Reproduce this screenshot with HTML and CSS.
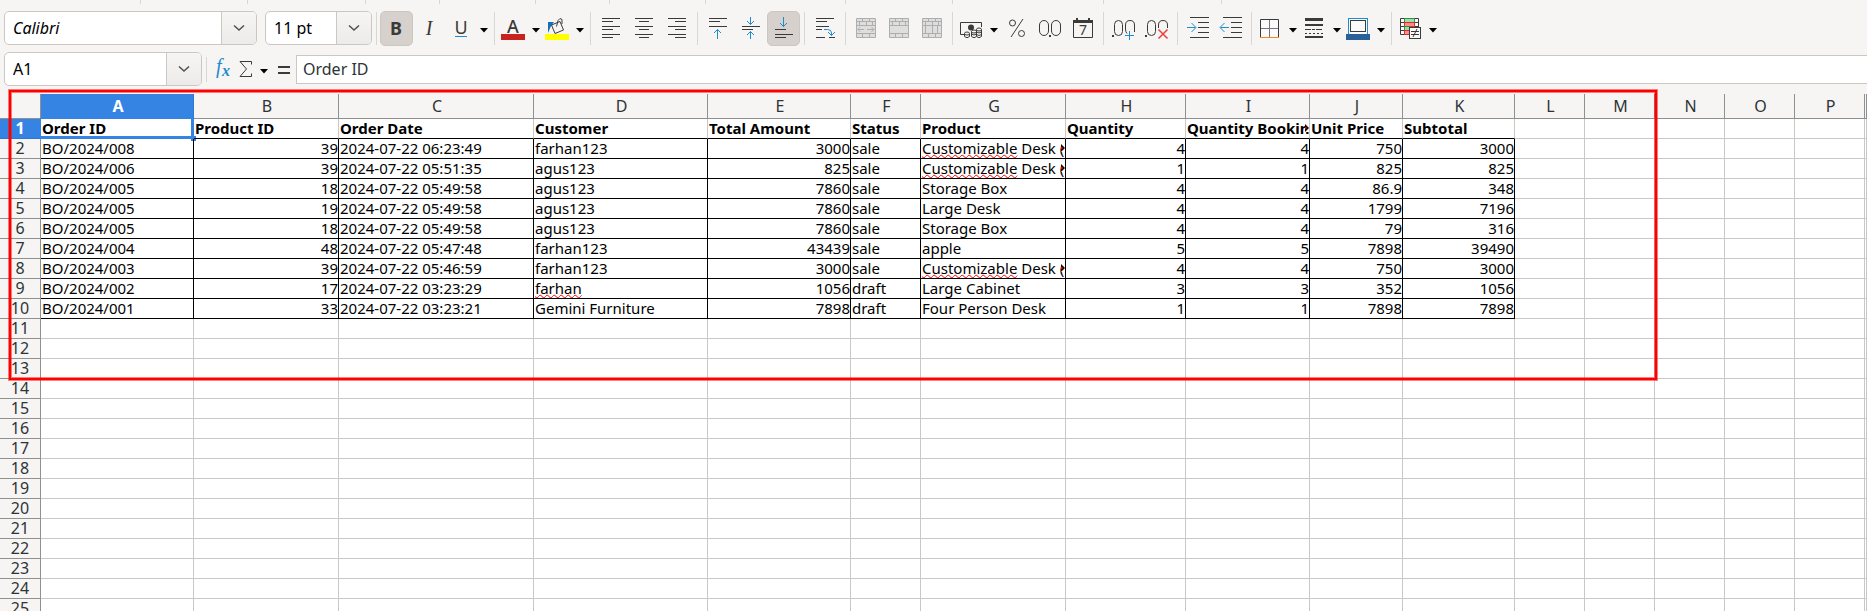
FILE: index.html
```html
<!DOCTYPE html>
<html lang="en">
<head>
<meta charset="utf-8">
<title>Spreadsheet</title>
<link rel="stylesheet" href="styles.css">
</head>
<body>
<div class="app">
  <div class="strip" aria-hidden="true"><i></i><i></i><i></i><i></i><i></i><i></i><i></i><i></i><i></i><i></i><i></i></div>

  <div class="toolbar" role="toolbar" aria-label="Formatting">
    <div class="combo combo-font">
      <input type="text" value="Calibri" aria-label="Font name">
      <button type="button" aria-label="Font list"><svg width="12" height="8" viewBox="0 0 12 8"><path class="chev" d="M1 1.500 L6 6 L11 1.500"/></svg></button>
    </div>
    <div class="combo combo-size">
      <input type="text" value="11 pt" aria-label="Font size">
      <button type="button" aria-label="Size list"><svg width="12" height="8" viewBox="0 0 12 8"><path class="chev" d="M1 1.500 L6 6 L11 1.500"/></svg></button>
    </div>
    <span class="sep"></span>
    <button type="button" class="tool on" aria-label="Bold"><svg viewBox="0 0 33 35"><text class="sans bold" x="16" y="24">B</text></svg></button>
    <button type="button" class="tool" aria-label="Italic"><svg viewBox="0 0 33 35"><text class="serif" x="16" y="24">I</text></svg></button>
    <button type="button" class="tool split" aria-label="Underline"><svg viewBox="0 0 44 35"><text class="sans" x="15" y="23">U</text><path class="b" d="M9 25.500H21"/><path class="caret" d="M34 17H42L38 21.500Z"/></svg></button>
    <span class="sep"></span>
    <button type="button" class="tool split" aria-label="Font color"><svg viewBox="0 0 44 35"><text class="sans semi" x="15" y="22">A</text><rect x="3" y="23" width="24" height="6" fill="#c9211e"/><path class="caret" d="M34 17H42L38 21.500Z"/></svg></button>
    <button type="button" class="tool split" aria-label="Background color"><svg viewBox="0 0 44 35"><path d="M6 22V11H12L9 15Z" fill="#1070c0"/><path d="M9.500 14L18 10.500L21.500 19L13 22.500Z" fill="#f6f5f4" stroke="#3a3a38"/><path class="k" d="M14.500 15.500L16 9.500Q18 6 20 8.500V13"/><rect x="3" y="23" width="24" height="6" fill="#ff0"/><path class="caret" d="M34 17H42L38 21.500Z"/></svg></button>
    <span class="sep"></span>
    <button type="button" class="tool" aria-label="Align left"><svg viewBox="0 0 33 35"><path class="k" d="M8 7.500H26M8 10.500H19M8 15.500H26M8 18.500H19M8 23.500H26M8 26.500H19"/></svg></button>
    <button type="button" class="tool" aria-label="Align center"><svg viewBox="0 0 33 35"><path class="k" d="M8 7.500H26M12 10.500H22M8 15.500H26M12 18.500H22M8 23.500H26M12 26.500H22"/></svg></button>
    <button type="button" class="tool" aria-label="Align right"><svg viewBox="0 0 33 35"><path class="k" d="M8 7.500H26M15 10.500H26M8 15.500H26M15 18.500H26M8 23.500H26M15 26.500H26"/></svg></button>
    <span class="sep"></span>
    <button type="button" class="tool" aria-label="Align top"><svg viewBox="0 0 33 35"><path class="k" d="M8 7.500H26M8 10.500H19M8 15.500H26"/><path class="b" d="M16.500 28V18.500M13 22L16.500 18.500L20 22"/></svg></button>
    <button type="button" class="tool" aria-label="Center vertically"><svg viewBox="0 0 33 35"><path class="k" d="M8 15.500H26M8 18.500H19"/><path class="b" d="M16.500 6V13.500M13 10L16.500 13.500L20 10M16.500 28V20.500M13 24L16.500 20.500L20 24"/></svg></button>
    <button type="button" class="tool on" aria-label="Align bottom"><svg viewBox="0 0 33 35"><path class="k" d="M8 18.500H19M8 23.500H26M8 26.500H19"/><path class="b" d="M16.500 6V15.500M13 12L16.500 15.500L20 12"/></svg></button>
    <span class="sep"></span>
    <button type="button" class="tool" aria-label="Wrap text"><svg viewBox="0 0 33 35"><path class="k" d="M8 7.500H26M8 10.500H19M8 15.500H21M8 18.500H14M8 26.500H17M21 26.500H27"/><path class="b" d="M16 18.500H19.500Q23.500 18.500 23.500 22V24.500M20 21L23.500 24.500L27 21"/></svg></button>
    <span class="sep"></span>
    <button type="button" class="tool" disabled aria-label="Merge and center"><svg viewBox="0 0 33 35"><path class="g" d="M7.500 7.500H26.500V26.500H7.500ZM7.500 10.500H26.500M7.500 14.500H26.500M7.500 22.500H26.500M13.500 7.500V10.500M20.500 7.500V10.500M10.500 10.500V14.500M17.500 10.500V14.500M23.500 10.500V14.500M13.500 22.500V26.500M20.500 22.500V26.500M9 18.500H15M11.500 16L9 18.500L11.500 21M18 18.500H25M22.500 16L25 18.500L22.500 21"/></svg></button>
    <button type="button" class="tool" disabled aria-label="Merge cells"><svg viewBox="0 0 33 35"><path class="g" d="M7.500 7.500H26.500V26.500H7.500ZM7.500 10.500H26.500M7.500 14.500H26.500M7.500 22.500H26.500M13.500 7.500V10.500M20.500 7.500V10.500M10.500 10.500V14.500M17.500 10.500V14.500M23.500 10.500V14.500M13.500 22.500V26.500M20.500 22.500V26.500"/></svg></button>
    <button type="button" class="tool" disabled aria-label="Unmerge cells"><svg viewBox="0 0 33 35"><path class="g" d="M7.500 7.500H26.500V26.500H7.500ZM7.500 10.500H26.500M7.500 14.500H26.500M7.500 22.500H26.500M13.500 7.500V10.500M20.500 7.500V10.500M10.500 10.500V22.500M17.500 10.500V22.500M23.500 10.500V14.500M22.500 14.500V22.500M13.500 22.500V26.500M20.500 22.500V26.500"/></svg></button>
    <span class="sep"></span>
    <button type="button" class="tool split" aria-label="Currency"><svg viewBox="0 0 44 35"><path class="k" d="M8 23.500H4.500V11.500H25.500V16"/><circle cx="15" cy="16.500" r="3" fill="#3a3a38"/><g fill="#f6f5f4" stroke="#3a3a38"><path d="M8.500 22.500V25.500Q11 28 13.500 25.500V22.500"/><ellipse cx="11" cy="22.500" rx="2.500" ry="1.500"/><path d="M15.500 20.500V25.500Q18 28 20.500 25.500V20.500M15.500 23Q18 25 20.500 23"/><ellipse cx="18" cy="20.500" rx="2.500" ry="1.500"/><path d="M20.500 18.500V25.500Q23 28 25.500 25.500V18.500M20.500 21Q23 23 25.500 21M20.500 23.500Q23 25.500 25.500 23.500"/><ellipse cx="23" cy="18.500" rx="2.500" ry="1.500"/></g><path class="caret" d="M34 17H42L38 21.500Z"/></svg></button>
    <button type="button" class="tool" aria-label="Percent"><svg viewBox="0 0 33 35"><path class="k" d="M23 8L11 26"/><circle class="k" cx="12.500" cy="12" r="3"/><circle class="k" cx="21.500" cy="22.500" r="3"/></svg></button>
    <button type="button" class="tool" aria-label="Number"><svg viewBox="0 0 33 35"><rect class="k" x="6.500" y="9.500" width="9" height="15" rx="4.500"/><rect class="k" x="18.500" y="9.500" width="9" height="15" rx="4.500"/><rect x="16" y="24" width="2" height="2" fill="#3a3a38"/></svg></button>
    <button type="button" class="tool" aria-label="Date"><svg viewBox="0 0 33 35"><path class="k" d="M7.500 9.500H26.500V26.500H7.500Z"/><path d="M7 9H27V12H7ZM10 7H12V9H10ZM22 7H24V9H22Z" fill="#3a3a38"/><text class="seven" x="17" y="24">7</text></svg></button>
    <span class="sep"></span>
    <button type="button" class="tool" aria-label="Add decimal place"><svg viewBox="0 0 33 35"><rect x="5" y="24" width="2" height="2" fill="#3a3a38"/><rect class="k" x="7.500" y="9.500" width="8" height="15" rx="4"/><path class="k" d="M20 22.500Q18.500 21 18.500 18V14Q18.500 9.500 23 9.500T27.500 14V21"/><path class="b" d="M18 24.500H27M22.500 20V29"/></svg></button>
    <button type="button" class="tool" aria-label="Delete decimal place"><svg viewBox="0 0 33 35"><rect x="5" y="24" width="2" height="2" fill="#3a3a38"/><rect class="k" x="7.500" y="9.500" width="8" height="15" rx="4"/><path class="k" d="M18.500 17V14Q18.500 9.500 23 9.500T27.500 14V17"/><path d="M18.500 18.500L27.500 27.500M27.500 18.500L18.500 27.500" stroke="#ed3d3b" stroke-width="1.500"/></svg></button>
    <span class="sep"></span>
    <button type="button" class="tool" aria-label="Increase indent"><svg viewBox="0 0 33 35"><path class="k" d="M9 6.500H28M17 11.500H28M17 16.500H28M17 21.500H28M9 26.500H28"/><path class="b" d="M6 16.500H14.500M10.500 12L15 16.500L10.500 21"/></svg></button>
    <button type="button" class="tool" aria-label="Decrease indent"><svg viewBox="0 0 33 35"><path class="k" d="M9 6.500H28M17 11.500H28M17 16.500H28M17 21.500H28M9 26.500H28"/><path class="b" d="M15 16.500H6.500M10.500 12L6 16.500L10.500 21"/></svg></button>
    <span class="sep"></span>
    <button type="button" class="tool split" aria-label="Borders"><svg viewBox="0 0 44 35"><rect x="5" y="8" width="19" height="18" fill="#fafafd"/><path d="M14.500 9V26M6 17.500H23" stroke="#77767b"/><path class="k" d="M5.500 26V8.500H23.500V26"/><path d="M5 26.500H24" stroke="#f08c1e"/><path class="caret" d="M34 17H42L38 21.500Z"/></svg></button>
    <button type="button" class="tool split" aria-label="Border style"><svg viewBox="0 0 44 35"><path d="M6 7H24V10H6ZM6 13H24V15H6ZM6 25H24V27H6Z" fill="#3a3a38"/><path class="k" d="M6 18.500H24" stroke-dasharray="6 1 3 1"/><path class="k" d="M6 22.500H24" stroke-dasharray="2 2"/><path class="caret" d="M34 17H42L38 21.500Z"/></svg></button>
    <button type="button" class="tool split" aria-label="Border color"><svg viewBox="0 0 44 35"><rect x="5.500" y="7.500" width="19" height="16" fill="#fafafa" stroke="#1e8bcd"/><rect x="7.500" y="9.500" width="15" height="11" fill="#fafafa" stroke="#3a3a38"/><rect x="3" y="23" width="24" height="6" fill="#2a6099"/><path class="caret" d="M34 17H42L38 21.500Z"/></svg></button>
    <span class="sep"></span>
    <button type="button" class="tool split" aria-label="Conditional formatting"><svg viewBox="0 0 44 35"><path fill="#fafafa" stroke="#3a3a38" d="M5.500 7.500H23.500V23.500H5.500ZM5.500 11.500H23.500M5.500 15.500H23.500M5.500 19.500H23.500M19.500 7.500V16"/><rect x="9.500" y="7.500" width="10" height="4" fill="#a1ddaa" stroke="#309048"/><rect x="9.500" y="11.500" width="10" height="4" fill="#ff8d83" stroke="#d8302c"/><rect x="9.500" y="15.500" width="5" height="4" fill="#a1ddaa" stroke="#309048"/><rect x="9.500" y="19.500" width="5" height="4" fill="#ff8d83" stroke="#d8302c"/><rect x="14.500" y="16.500" width="11" height="11" fill="#fafafa" stroke="#3a3a38"/><path class="k" d="M16 20.500H24M16 23.500H24M22 18L18 26"/><path class="caret" d="M34 17H42L38 21.500Z"/></svg></button>
  </div>

  <div class="formula">
    <div class="combo combo-name">
      <input type="text" value="A1" aria-label="Name box">
      <button type="button" aria-label="Name list"><svg width="12" height="8" viewBox="0 0 12 8"><path class="chev" d="M1 1.500 L6 6 L11 1.500"/></svg></button>
    </div>
    <span class="sep short"></span>
    <button type="button" class="fn fn-wizard" aria-label="Function wizard"><svg viewBox="0 0 27 35"><text class="fx" x="8" y="21">f</text><text class="fx small" x="14" y="24">x</text></svg></button>
    <button type="button" class="fn fn-sum" aria-label="Select function"><svg viewBox="0 0 38 35"><path class="k" d="M16.500 12.500V9.500H5L11.500 17L5 24.500H16.500V21.500"/><path class="caret" d="M25 17H33L29 21.500Z"/></svg></button>
    <button type="button" class="fn fn-eq" aria-label="Formula"><svg viewBox="0 0 23 35"><path d="M5 14H17V16H5ZM5 20H17V22H5Z" fill="#3a3a38"/></svg></button>
    <input class="line" type="text" value="Order ID" aria-label="Input line">
  </div>

  <main class="sheet">
    <table class="grid">
      <colgroup>
        <col class="w-head"><col class="w-a"><col class="w-b"><col class="w-c"><col class="w-d"><col class="w-e"><col class="w-f"><col class="w-b"><col class="w-h"><col class="w-i"><col class="w-j"><col class="w-k"><col class="w-f"><col class="w-f"><col class="w-f"><col class="w-f"><col class="w-f"><col>
      </colgroup>
      <thead><tr id="letters"><th></th></tr></thead>
      <tbody id="rows"></tbody>
    </table>
    <div class="frame"></div>
  </main>
</div>
<script src="grid.js"></script>
</body>
</html>
```
FILE: grid.js
```js
const LETTERS = "ABCDEFGHIJKLMNOP".split("").concat("");
const ROW_COUNT = 25;
const NUMERIC = new Set([1, 4, 7, 8, 9, 10]);
const DATA = [
  ["Order ID", "Product ID", "Order Date", "Customer", "Total Amount", "Status", "Product", "Quantity", "Quantity Bookin", "Unit Price", "Subtotal"],
  ["BO/2024/008", 39, "2024-07-22 06:23:49", "farhan123", 3000, "sale", "~Customizable~ Desk (", 4, 4, 750, 3000],
  ["BO/2024/006", 39, "2024-07-22 05:51:35", "agus123", 825, "sale", "~Customizable~ Desk (", 1, 1, 825, 825],
  ["BO/2024/005", 18, "2024-07-22 05:49:58", "agus123", 7860, "sale", "Storage Box", 4, 4, 86.9, 348],
  ["BO/2024/005", 19, "2024-07-22 05:49:58", "agus123", 7860, "sale", "Large Desk", 4, 4, 1799, 7196],
  ["BO/2024/005", 18, "2024-07-22 05:49:58", "agus123", 7860, "sale", "Storage Box", 4, 4, 79, 316],
  ["BO/2024/004", 48, "2024-07-22 05:47:48", "farhan123", 43439, "sale", "apple", 5, 5, 7898, 39490],
  ["BO/2024/003", 39, "2024-07-22 05:46:59", "farhan123", 3000, "sale", "~Customizable~ Desk (", 4, 4, 750, 3000],
  ["BO/2024/002", 17, "2024-07-22 03:23:29", "~farhan~", 1056, "draft", "Large Cabinet", 3, 3, 352, 1056],
  ["BO/2024/001", 33, "2024-07-22 03:23:21", "Gemini Furniture", 7898, "draft", "Four Person Desk", 1, 1, 7898, 7898]
];

// Words between tildes are unknown to the spell checker.
const markup = (v) => String(v).replace(/~(.+?)~/g, '<span class="typo">$1</span>');
const MORE = '<svg class="more" width="4" height="8" viewBox="0 0 4 8"><path d="M0 0L4 4L0 8Z" fill="#000"/><path d="M0 2.500V5.500L2.500 4Z" fill="#f00"/></svg>';

const letters = document.getElementById("letters");
LETTERS.forEach((name, i) => {
  const th = document.createElement("th");
  th.scope = "col";
  th.textContent = name;
  if (i === 0) th.className = "current";
  letters.append(th);
});

const body = document.getElementById("rows");
for (let r = 0; r < ROW_COUNT; r++) {
  const tr = document.createElement("tr");
  const head = document.createElement("th");
  head.scope = "row";
  head.textContent = r + 1;
  if (r === 0) head.className = "current";
  tr.append(head);
  LETTERS.forEach((_, c) => {
    const td = document.createElement("td");
    const value = DATA[r] && DATA[r][c];
    if (value !== undefined) {
      td.className = r === 0 ? "title" : NUMERIC.has(c) ? "filled num" : "filled";
      const cut = /Bookin$|\($/.test(value);
      td.innerHTML = markup(value) + (cut ? MORE : "");
      if (r === 0 && c === 0) {
        td.classList.add("active");
        td.innerHTML += '<span class="cursor"></span>';
      }
    }
    tr.append(td);
  });
  body.append(tr);
}
```
FILE: styles.css
```css
* { box-sizing: border-box; }
html, body { height: 100%; margin: 0; }
body {
  overflow: hidden;
  background: #f6f5f4;
  color: #000;
  font-family: "Noto Sans", "Open Sans", sans-serif;
  font-size: 16px;
}
button, input { font: inherit; color: inherit; margin: 0; padding: 0; border: 0; background: none; }
.app { display: flex; flex-direction: column; height: 100%; overflow: hidden; }

/* lower edge of the toolbar above */
.strip {
  flex: none;
  display: grid;
  grid-template-columns: 141px 107px 118px 74px 96px 74px 96px 140px 107px 151px 118px;
  height: 4px;
}
.strip i { border-right: 1px solid #d9d6d3; }

.toolbar { flex: none; display: flex; align-items: flex-start; padding: 7px 4px 6px; }
.sep { flex: none; width: 1px; height: 33px; margin: 1px 3px 0 4px; background: #d9d6d3; }
.sep.short { height: 25px; margin-top: 5px; margin-right: 1px; }

.combo {
  flex: none;
  display: flex;
  height: 34px;
  border: 1px solid #cdc7c2;
  border-radius: 5px;
  background: #fff;
  overflow: hidden;
}
.combo input { flex: 1; min-width: 0; padding-left: 8px; outline: 0; }
.combo button {
  flex: none;
  display: flex;
  align-items: center;
  justify-content: center;
  width: 35px;
  border-left: 1px solid #cdc7c2;
  background: linear-gradient(#f6f5f4, #edebe9);
}
.combo-font { width: 253px; margin-right: 8px; }
.combo-font input { font-style: italic; }
.combo-size { width: 107px; }
.combo-name { width: 198px; }

.tool { flex: none; width: 33px; height: 35px; border-radius: 5px; }
.tool.on { background: #d6d1cd; border: 1px solid #cdc7c2; }
.tool.on svg { margin: -1px; }
.tool svg { width: 33px; }
.tool.split, .tool.split svg { width: 44px; }
.tool svg, .fn svg { display: block; height: 35px; }

svg { fill: none; }
.k { stroke: #3a3a38; }
.b { stroke: #1e8bcd; }
.g { stroke: #aeaeae; fill: #dedede; }
.caret { fill: #000; }
.chev { stroke: #50504e; stroke-width: 1.5; }
svg text { fill: #3a3a38; text-anchor: middle; font-size: 18px; }
svg .bold { font-weight: 700; }
svg .semi { font-weight: 500; }
svg .serif { font-family: "Liberation Serif", serif; font-style: italic; font-size: 20px; }
svg .seven { font-size: 14px; }
svg .fx { font-family: "Liberation Serif", serif; font-style: italic; font-size: 20px; fill: #1e8bcd; text-anchor: start; }
svg .fx.small { font-size: 16px; font-weight: 700; }

.formula { flex: none; display: flex; align-items: flex-start; height: 42px; padding-left: 4px; }
.fn { flex: none; height: 35px; }
.fn-wizard, .fn-wizard svg { width: 27px; }
.fn-sum, .fn-sum svg { width: 38px; }
.fn-eq, .fn-eq svg { width: 23px; }
.line {
  flex: 1;
  min-width: 0;
  height: 29px;
  margin-top: 3px;
  padding: 0 0 2px 6px;
  border: 1px solid #cdc7c2;
  border-right: 0;
  background: #fff;
  color: #2e3436;
  outline: 0;
}

.sheet { flex: 1; min-height: 0; position: relative; background: #fff; }
.grid { width: 100%; table-layout: fixed; border-collapse: separate; border-spacing: 0; }
.w-head { width: 41px; }
.w-a { width: 153px; }
.w-b { width: 145px; }
.w-c { width: 195px; }
.w-d { width: 174px; }
.w-e { width: 143px; }
.w-f { width: 70px; }
.w-h { width: 120px; }
.w-i { width: 124px; }
.w-j { width: 93px; }
.w-k { width: 112px; }

.grid th {
  padding: 0;
  border: solid #8e918f;
  border-width: 0 1px 1px 0;
  background: #f6f5f4;
  color: #2e3436;
  font-weight: 400;
  line-height: 19px;
}
.grid thead th { height: 25px; padding-left: 2px; line-height: 24px; }
.grid th.current { background: #3584e4; border-color: #3077cf; color: #fff; font-weight: 700; }
.grid td {
  position: relative;
  height: 20px;
  padding: 0 1px;
  border: solid #c8c8c8;
  border-width: 0 1px 1px 0;
  font-size: 15px;
  line-height: 19px;
  white-space: nowrap;
  overflow: hidden;
}
.grid td.title { font-weight: 700; border-bottom-color: #000; }
.grid td.filled { border-color: #000; }
.grid td.num { padding-right: 0; text-align: right; }
.grid td.active { overflow: visible; }

.typo { text-decoration: underline wavy #f00 1px; text-underline-offset: 0; text-decoration-skip-ink: none; }
.more { position: absolute; right: 0; top: 5px; background: #fff; }

/* cell cursor and its fill handle */
.cursor {
  position: absolute;
  inset: -1px -1px -1px -1px;
  border: solid #3584e4;
  border-width: 1px 3px 3px 1px;
}
.cursor::after {
  content: "";
  position: absolute;
  right: -5px;
  bottom: -5px;
  width: 5px;
  height: 5px;
  background: #3584e4;
}

/* highlight drawn over the data range */
.frame {
  position: absolute;
  left: 9px;
  top: -4px;
  width: 1648px;
  height: 290px;
  border: 2px solid #f00;
  box-shadow: 0 0 0 1px rgba(255, 0, 0, .5), inset 0 0 0 1px rgba(255, 0, 0, .5);
  pointer-events: none;
}
```
